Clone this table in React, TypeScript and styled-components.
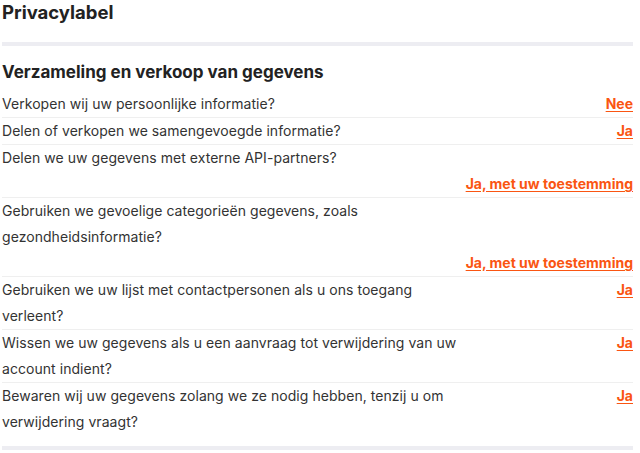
import React from "react";
import styled, { createGlobalStyle } from "styled-components";

const Global = createGlobalStyle`
  html, body { margin: 0; padding: 0; background: #fff; }
  body { font-family: Inter, "Noto Sans", sans-serif; color: #333; }
`;

const Page = styled.div`
  width: 631px;
  padding: 0 7px 0 2px;
`;

const Title = styled.h1`
  margin: 0;
  font-size: 18.5px;
  line-height: 24px;
  font-weight: 700;
  color: #222;
`;

const Divider = styled.div<{ $top: number }>`
  height: 4px;
  background: #ededf2;
  margin-top: ${(p) => p.$top}px;
`;

const Heading = styled.h2`
  margin: 13px 0 6px;
  font-size: 17px;
  line-height: 26px;
  font-weight: 700;
  color: #222;
`;

const List = styled.div`
  display: flex;
  flex-direction: column;
`;

const Row = styled.div`
  display: flex;
  flex-wrap: wrap;
  align-items: flex-start;
  border-bottom: 1px solid #efefef;
  &:last-child { border-bottom: none; }
`;

const Question = styled.div`
  flex: 0 1 470px;
  font-size: 14px;
  line-height: 26px;
  letter-spacing: 0.05px;
  color: #333;
`;

const Answer = styled.a`
  margin-left: auto;
  font-size: 14px;
  line-height: 26px;
  font-weight: 700;
  color: #fa5512;
  text-decoration: underline;
  text-underline-offset: 2px;
  white-space: nowrap;
  cursor: pointer;
`;

const rows: [string, string][] = [
  ["Verkopen wij uw persoonlijke informatie?", "Nee"],
  ["Delen of verkopen we samengevoegde informatie?", "Ja"],
  ["Delen we uw gegevens met externe API-partners?", "Ja, met uw toestemming"],
  ["Gebruiken we gevoelige categorieën gegevens, zoals gezondheidsinformatie?", "Ja, met uw toestemming"],
  ["Gebruiken we uw lijst met contactpersonen als u ons toegang verleent?", "Ja"],
  ["Wissen we uw gegevens als u een aanvraag tot verwijdering van uw account indient?", "Ja"],
  ["Bewaren wij uw gegevens zolang we ze nodig hebben, tenzij u om verwijdering vraagt?", "Ja"],
];

export default function App() {
  return (
    <Page>
      <Global />
      <Title>Privacylabel</Title>
      <Divider $top={18} />
      <Heading>Verzameling en verkoop van gegevens</Heading>
      <List>
        {rows.map(([q, a], i) => (
          <Row key={i}>
            <Question>{q}</Question>
            <Answer>{a}</Answer>
          </Row>
        ))}
      </List>
      <Divider $top={11} />
    </Page>
  );
}
